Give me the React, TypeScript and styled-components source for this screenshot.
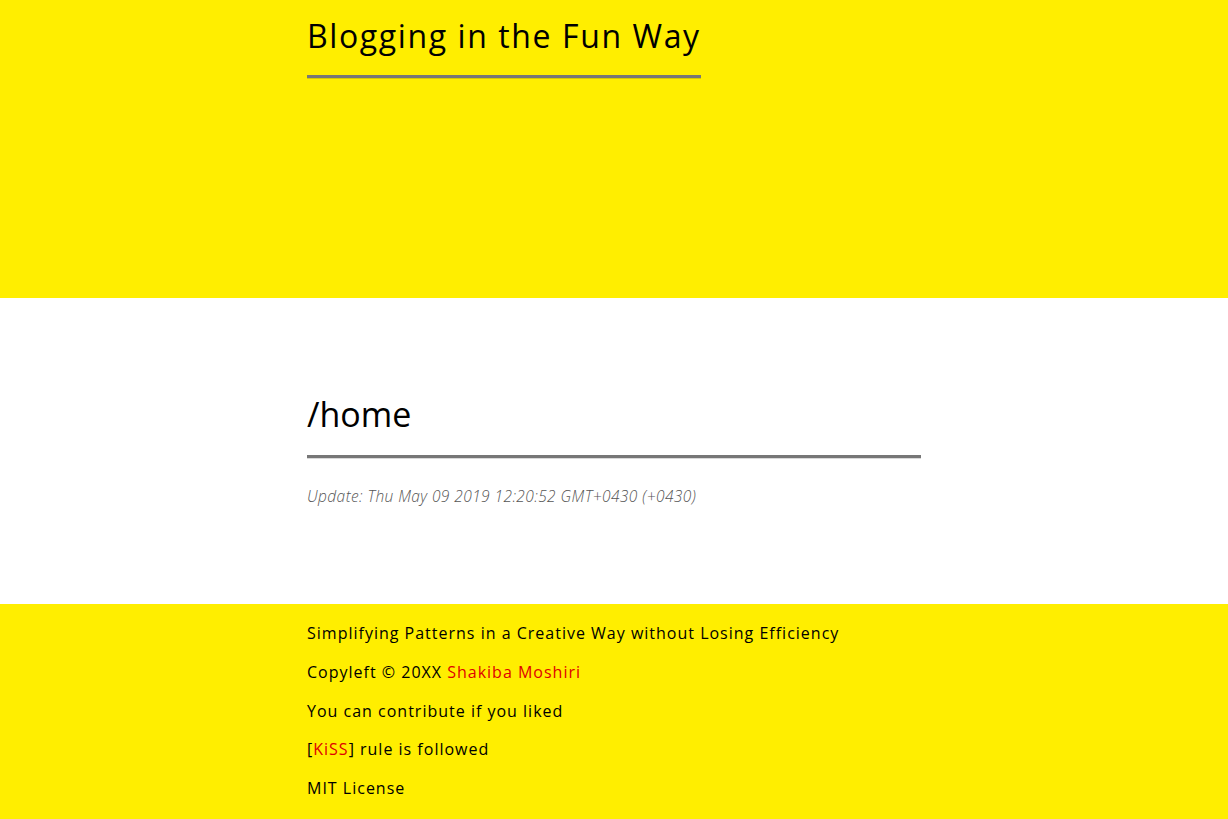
import React from "react";
import styled, { createGlobalStyle } from "styled-components";

const Global = createGlobalStyle`
  html, body { margin: 0; padding: 0; background: #ffee00; }
  body { font-family: "Open Sans", "Liberation Sans", sans-serif; color: #000; }
`;

const Band = styled.section<{ $bg: string; $h: number }>`
  background: ${(p) => p.$bg};
  height: ${(p) => p.$h}px;
  box-sizing: border-box;
`;

const Container = styled.div<{ $pt: number }>`
  width: 50%;
  margin: 0 auto;
  padding-top: ${(p) => p.$pt}px;
`;

const Title = styled.h1`
  display: inline-block;
  margin: 0;
  font-size: 32px;
  font-weight: 400;
  line-height: 44px;
  letter-spacing: 1.6px;
  padding-bottom: 17px;
  border-bottom: 3px solid #777;
  box-shadow: 0 1px 0 rgba(0, 0, 0, 0.15);
`;

const PageTitle = styled.h2`
  margin: 0;
  font-size: 34px;
  font-weight: 400;
  line-height: 44px;
  padding-bottom: 19px;
  border-bottom: 3px solid #777;
  box-shadow: 0 1px 0 rgba(0, 0, 0, 0.15);
`;

const Updated = styled.p`
  margin: 27px 0 0;
  font-size: 15.5px;
  font-style: italic;
  font-weight: 300;
  letter-spacing: 0.42px;
  color: #555;
`;

const FooterLine = styled.p`
  margin: 0;
  font-size: 16px;
  line-height: 38.8px;
  letter-spacing: 1px;
`;

const Link = styled.a`
  color: #e00000;
  text-decoration: none;
`;

export default function App() {
  return (
    <>
      <Global />
      <Band $bg="#ffee00" $h={298}>
        <Container $pt={14}>
          <Title>Blogging in the Fun Way</Title>
        </Container>
      </Band>
      <Band $bg="#ffffff" $h={306}>
        <Container $pt={94}>
          <PageTitle>/home</PageTitle>
          <Updated>Update: Thu May 09 2019 12:20:52 GMT+0430 (+0430)</Updated>
        </Container>
      </Band>
      <Band $bg="#ffee00" $h={215}>
        <Container $pt={10}>
          <FooterLine>Simplifying Patterns in a Creative Way without Losing Efficiency</FooterLine>
          <FooterLine>
            Copyleft © 20XX <Link href="#">Shakiba Moshiri</Link>
          </FooterLine>
          <FooterLine>You can contribute if you liked</FooterLine>
          <FooterLine>
            [<Link href="#">KiSS</Link>] rule is followed
          </FooterLine>
          <FooterLine>MIT License</FooterLine>
        </Container>
      </Band>
    </>
  );
}
